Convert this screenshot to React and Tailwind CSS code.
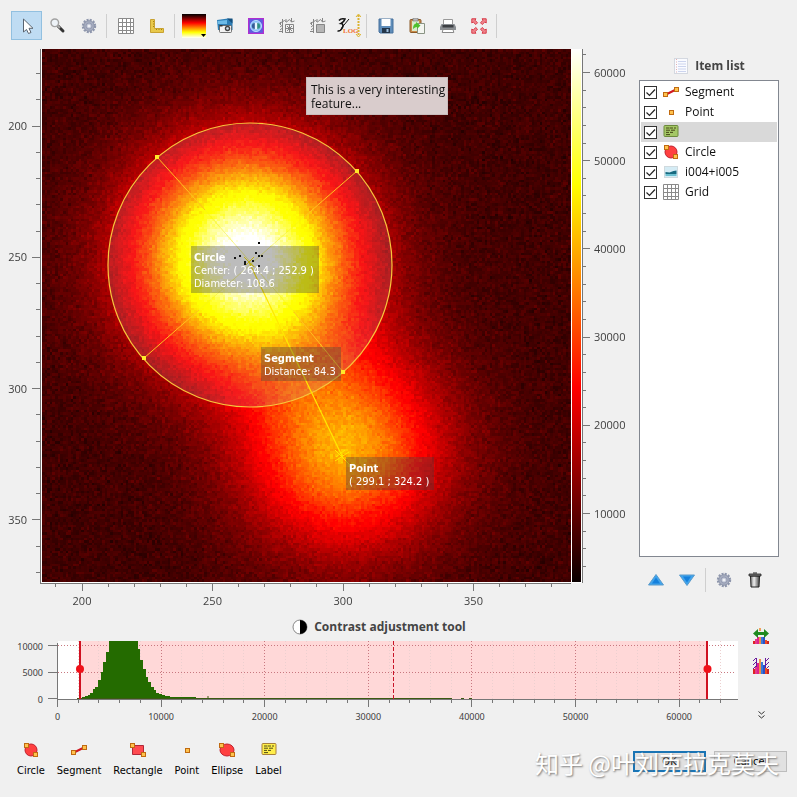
import { useEffect, useRef } from "react";

const range = (from, to, step) => {
  const out = [];
  for (let v = from; v <= to; v += step) out.push(v);
  return out;
};

/* ---------- icons ---------- */

const Icon = ({ size = 16, box = 16, children }) => (
  <svg width={size} height={size} viewBox={`0 0 ${box} ${box}`} aria-hidden="true" className="shrink-0">
    {children}
  </svg>
);

const Handle = ({ x, y }) => <rect x={x} y={y} width="4" height="4" fill="#ffc24d" stroke="#c06a10" />;

const CursorIcon = () => (
  <Icon>
    <path d="M4.500 1v13l3-2.500 2 4 2.500-1-2-4.200h4z" fill="#fff" stroke="#5a6470" strokeLinejoin="round" />
  </Icon>
);
const ZoomIcon = () => (
  <Icon>
    <path d="M8 8 13 13" stroke="#333" strokeWidth="3" strokeLinecap="round" />
    <path d="M7.500 7.500 10 10" stroke="#aaa" strokeWidth="2" />
    <circle cx="4.800" cy="4.800" r="3.800" fill="#eef3f8" stroke="#a2a2a2" strokeWidth="1.400" />
  </Icon>
);
const GearIcon = () => (
  <Icon>
    <circle cx="8" cy="8" r="6" fill="none" stroke="#8f97ad" strokeWidth="2.400" strokeDasharray="2 1.140" />
    <circle cx="8" cy="8" r="5.300" fill="#a6adc0" stroke="#868ea5" strokeWidth=".8" />
    <circle cx="8" cy="8" r="3" fill="#b9bfd0" stroke="#8c94aa" strokeWidth=".7" />
    <circle cx="8" cy="8" r="1.600" fill="#eef0f5" />
  </Icon>
);
const GridIcon = () => (
  <Icon>
    <path d="M.5.5h15v15H.5z" fill="#fff" />
    <path d="M.5.5h15v15H.5zM4.500 0v16M8.500 0v16M12.500 0v16M0 4.500h16M0 8.500h16M0 12.500h16" fill="none" stroke="#8a8a8a" />
  </Icon>
);
const RulerIcon = () => (
  <Icon>
    <path d="M1.500 1.500h4v9h9v4h-13z" fill="#e8c84a" stroke="#c8a232" />
    <path d="M4 3.500h1M4 6h1M4 8.500h1M7.500 11v1M10 11v1M12.500 11v1" stroke="#a58010" />
  </Icon>
);
const ColormapIcon = () => (
  <Icon size={24} box={24}>
    <defs>
      <linearGradient id="cmap" x1="0" y1="0" x2="0" y2="1">
        <stop offset="0" stopColor="#000" />
        <stop offset=".37" stopColor="#f00" />
        <stop offset=".76" stopColor="#ff0" />
        <stop offset="1" stopColor="#fff" />
      </linearGradient>
    </defs>
    <rect y="0" width="24" height="24" fill="url(#cmap)" />
    <path d="M19 20h5l-2.500 3z" fill="#000" />
  </Icon>
);
const SnapshotIcon = () => (
  <Icon>
    <path d="M0 2 11 .500l4.500 1V12H1z" fill="#2b7db5" />
    <path d="M.5 3 10 2v4H1z" fill="#6cbbe8" />
    <path d="M10 .5h5.500v5z" fill="#134f7d" />
    <rect x="2.500" y="7.500" width="12" height="7" rx="1" fill="#f2f2f2" stroke="#555" strokeWidth=".8" />
    <path d="M2.500 7h3v1.500h-3z" fill="#333" />
    <circle cx="10.500" cy="10.500" r="2.700" fill="#444" />
    <circle cx="10.500" cy="10.500" r="1.300" fill="#cfe2f0" />
  </Icon>
);
const ContrastPreviewIcon = () => (
  <Icon>
    <rect x=".5" y=".5" width="15" height="15" fill="#5a5fe0" stroke="#b02fd0" strokeWidth="1.500" />
    <circle cx="8" cy="8" r="5.500" fill="#7fb8f5" stroke="#bfe0ff" />
    <circle cx="8" cy="8" r="3.600" fill="#e8f6ff" />
    <path d="M6.800 5a3 3 0 0 0 0 6z" fill="#345a96" />
    <path d="M9.200 5a3 3 0 0 1 0 6z" fill="#2f8f86" />
  </Icon>
);
const SectionXIcon = ({ filled }) => (
  <Icon>
    <g fill="none" stroke="#858585">
      <path d="M3.500 1v14M0 13.500h4M0 5.500l3-1.500 2.500-1.500 2 1.500 3-2.500 2 2.500 3-1M1 9l2.500-2M1 12l2.500-2M12.500 0v4M7 1v3M1.500 4v3" />
      {filled ? (
        <path d="M6.500 6.500h8v8h-8z" fill="#b5b5b5" />
      ) : (
        <path d="M6.500 6.500h8v8h-8zM6 10.500h9M10.500 6v9M8 8l5 5M13 8l-5 5" />
      )}
    </g>
  </Icon>
);
const LogIcon = () => (
  <svg width="24" height="26" viewBox="0 0 24 26" aria-hidden="true">
    <path d="M2 7.500q2-2.500 6-1.500-1 3-4 4.500 3 .5 1.500 4-2 4-5 3.500" fill="none" stroke="#111" strokeWidth="1.600" />
    <path d="M4.500 15 12 6" stroke="#111" />
    <text x="6" y="20" fontSize="7" fontWeight="bold" fill="#f07030" fontFamily="Liberation Serif, serif">LOG</text>
    <path d="M21.500 2v21" stroke="#dcb432" strokeWidth="2" strokeDasharray="2 1" />
    <path d="m19 4 2.500-3L24 4M19 21l2.500 3 2.500-3" fill="none" stroke="#dcb432" />
  </svg>
);
const SaveIcon = () => (
  <Icon>
    <path d="M1 1h14v14H2l-1-1z" fill="#5f8dba" stroke="#46719c" />
    <rect x="3.500" y="1" width="9" height="7" fill="#fff" />
    <rect x="4" y="10" width="8" height="5" fill="#24364a" />
    <rect x="8.500" y="11" width="2" height="3" fill="#9fc0df" />
  </Icon>
);
const PasteIcon = () => (
  <Icon>
    <rect x="1" y="1.500" width="11" height="13" rx="1" fill="#c98a4b" stroke="#8b5a28" />
    <rect x="3" y="3" width="7" height="10" fill="#d9ebcc" />
    <rect x="4" y="0" width="5" height="3" fill="#b9b9b9" stroke="#777" strokeWidth=".6" />
    <path d="M8.500 5.500h7v10h-7z" fill="#f4f6f1" stroke="#8a9484" />
    <path d="M4 11q0-5 3-5.500V4l4.500 3.500L8 11V9q-2 0-4 2z" fill="#4fc02d" />
  </Icon>
);
const PrintIcon = () => (
  <Icon>
    <path d="M3.500 1.500h9v5h-9z" fill="#fff" stroke="#999" />
    <path d="M1.500 6h13L16 9v3H0V9z" fill="#8a8e92" />
    <path d="M2.500 7h11v2.500h-11z" fill="#3c3f43" />
    <path d="M3 11.500h10l.8 3H2.200z" fill="#fff" stroke="#888" />
  </Icon>
);
const ExpandIcon = () => (
  <Icon>
    <g stroke="#d83a48" fill="#f08890">
      <path d="m.8.8h4.200L4 2.200 6.500 4.800 4.800 6.500 2.200 4 .8 5z" />
      <path d="M15.200.8v4.200l-1.400-1-2.600 2.500-1.700-1.700L12 2.200 11 .8z" />
      <path d="M.8 15.200V11l1.400 1 2.600-2.500 1.700 1.700L4 13.800l1 1.400z" />
      <path d="M15.200 15.200H11l1-1.400-2.500-2.600 1.700-1.700 2.600 2.500 1.400-1z" />
    </g>
  </Icon>
);

const CircleIcon = () => (
  <Icon>
    <circle cx="8" cy="8" r="6" fill="#ff4040" stroke="#c0202c" />
    <Handle x={1.5} y={1.5} />
    <Handle x={10.5} y={10.5} />
  </Icon>
);
const EllipseIcon = () => (
  <Icon>
    <ellipse cx="8" cy="8" rx="7" ry="6" fill="#ff4040" stroke="#c0202c" />
    <Handle x={0.5} y={1.5} />
    <Handle x={11.5} y={10.5} />
  </Icon>
);
const SegmentIcon = () => (
  <Icon>
    <path d="M3 10.500 13 5.500" stroke="#d01820" strokeWidth="2" />
    <Handle x={0.5} y={8.5} />
    <Handle x={11.5} y={3.5} />
  </Icon>
);
const RectangleIcon = () => (
  <Icon>
    <path d="M2.500 3.500h11v9h-11z" fill="#ff4a50" stroke="#b02838" />
    <Handle x={0.5} y={1.5} />
    <Handle x={11.5} y={10.5} />
  </Icon>
);
const PointIcon = () => (
  <Icon>
    <Handle x={6.5} y={6.5} />
  </Icon>
);
const LabelIcon = ({ green }) => (
  <Icon>
    <rect x="1" y="1.500" width="14" height="11" rx="1" fill={green ? "#a4c765" : "#ffee4a"} stroke={green ? "#6c8a3c" : "#a8803a"} />
    <path d="M3 4h3.500m.5 0h3m1 0h2M3 6.200h4m1 0h4M3 8.400h3m1 0h3M3 10.600h4" stroke="#3c3a10" strokeWidth=".9" />
  </Icon>
);
const ImageIcon = () => (
  <Icon>
    <rect x="1.500" y="2.500" width="13" height="11" fill="#d5ecf5" stroke="#d0dade" />
    <path d="M2.500 8l4 .500 4-1.500 3-.500V10h-11z" fill="#176a80" />
    <path d="M2.500 10h11v2h-11z" fill="#6cc0d0" />
  </Icon>
);
const ListIcon = () => (
  <Icon>
    <rect x="1.500" y=".5" width="13" height="15" fill="#fafbff" stroke="#d4d8e0" />
    <path d="M5 3.500h8M5 6h8M5 8.500h8M5 11h8M5 13.500h8" stroke="#ccd4ee" />
    <path d="M3.500 1v14" stroke="#e0b0b0" strokeDasharray="1 1.500" />
  </Icon>
);
const ArrowIcon = ({ down }) => (
  <Icon>
    <path d={down ? "M.5 3h15L8 13.500z" : "M.5 13h15L8 2.500z"} fill="#3fa4ee" stroke="#5b9aca" strokeLinejoin="round" />
    <path d={down ? "M4 4.500h8l-4 6z" : "M4 11.500h8l-4-6z"} fill="#1580dc" />
  </Icon>
);
const TrashIcon = () => (
  <Icon>
    <defs>
      <linearGradient id="can">
        <stop offset="0" stopColor="#777" />
        <stop offset=".4" stopColor="#eee" />
        <stop offset="1" stopColor="#444" />
      </linearGradient>
    </defs>
    <path d="M3.500 4h9l-.5 11H4z" fill="url(#can)" stroke="#222" />
    <path d="M2 2h12v2H2z" fill="#777" stroke="#222" strokeWidth=".8" />
    <path d="M6 1h4" stroke="#222" />
  </Icon>
);
const HalfMoonIcon = () => (
  <Icon>
    <circle cx="8" cy="8" r="7" fill="#fff" stroke="#888" />
    <path d="M8 1a7 7 0 0 1 0 14z" fill="#000" />
  </Icon>
);
const BARS = [
  [0, 3, "#d22"], [2, 5, "#e33a8a"], [4, 9, "#e0208c"], [6, 13, "#f0904a"],
  [8, 10, "#3a78d8"], [10, 7, "#2a50c8"], [12, 4, "#ee4a22"], [14, 3, "#c22"],
];
const HistogramIcon = ({ kind }) => (
  <Icon>
    {kind === "clip" && (
      <path d="M0 3l3-3M0 7l4-4M0 11l4-4M0 15l4-4M12 4l4-4M12 8l4-4M12 12l4-4M13 15l3-3M3.500 0v12M12.500 0v12" stroke="#6a1a9c" />
    )}
    {BARS.map(([x, h, c]) => {
      const height = kind === "full" ? Math.min(h, 7) : h + 2;
      return <rect key={x} x={x} y={16 - height} width="2" height={height} fill={c} />;
    })}
    {kind === "full" && (
      <>
        <path d="M0 5.500 5 1v3h6V1l5 4.500-5 4.500V7H5v3z" fill="#1f8a1f" />
        <rect x="6" y="0" width="2" height="3" fill="#f0a05a" />
      </>
    )}
  </Icon>
);

/* ---------- toolbar ---------- */

const TOOLS = [
  [["Select", CursorIcon], ["Zoom", ZoomIcon], ["Settings", GearIcon]],
  [["Grid", GridIcon], ["Axes", RulerIcon]],
  [
    ["Colormap", ColormapIcon],
    ["Snapshot", SnapshotIcon],
    ["Contrast", ContrastPreviewIcon],
    ["Cross section", SectionXIcon],
    ["Average cross section", () => <SectionXIcon filled />],
    ["Logarithmic scale", LogIcon],
  ],
  [["Save", SaveIcon], ["Paste", PasteIcon], ["Print", PrintIcon], ["Full screen", ExpandIcon]],
];

function Toolbar() {
  return (
    <header className="flex h-[49px] items-start px-[11px] pt-[11px]">
      {TOOLS.map((group, g) => (
        <div key={g} className="flex items-center">
          {group.map(([name, Glyph], i) => (
            <button
              key={name}
              type="button"
              aria-label={name}
              className={
                g === 0 && i === 0
                  ? "flex h-[29px] w-[31px] items-center justify-center border border-[#92c0e0] bg-[#bfdcf3]"
                  : "flex h-[29px] w-[31px] items-center justify-center"
              }
            >
              <Glyph />
            </button>
          ))}
          <div className="mr-[3px] ml-[2px] h-6 w-px bg-[#cfcfcf]" />
        </div>
      ))}
    </header>
  );
}

/* ---------- image plot ---------- */

const COLS = 202;
const ROWS = 204;

function Heatmap() {
  const ref = useRef(null);
  useEffect(() => {
    const ctx = ref.current.getContext("2d");
    const img = ctx.createImageData(COLS, ROWS);
    let seed = 12345;
    const rnd = () => {
      seed = (seed * 1664525 + 1013904223) % 4294967296;
      return seed / 4294967296;
    };
    for (let j = 0; j < ROWS; j++) {
      for (let i = 0; i < COLS; i++) {
        const x = 42 + (i + 0.5) * (529 / COLS);
        const y = 49 + (j + 0.5) * (533 / ROWS);
        const d1 = (x - 246) ** 2 + (y - 258) ** 2;
        const d2 = (x - 345) ** 2 + (y - 450) ** 2;
        const noise = (rnd() + rnd() + rnd() - 1.5) * 2000;
        const v = 7000 + 57000 * Math.exp(-d1 / 11000) + 31000 * Math.exp(-d2 / 9600) + noise;
        const t = Math.max(0, Math.min(1, (v - 2200) / 60500));
        const k = (j * COLS + i) * 4;
        img.data[k] = Math.min(255, 10 + (t / 0.355) * 245);
        img.data[k + 1] = Math.max(0, Math.min(255, ((t - 0.365) / 0.35) * 255));
        img.data[k + 2] = Math.max(0, Math.min(255, ((t - 0.76) / 0.22) * 255));
        img.data[k + 3] = 255;
      }
    }
    ctx.putImageData(img, 0, 0);
  }, []);
  return <canvas ref={ref} width={COLS} height={ROWS} className="block h-full w-full [image-rendering:pixelated]" />;
}

const SPECKS = [[258, 242], [234, 257], [239, 255], [255, 252], [258, 255], [261, 255], [244, 261], [252, 260], [258, 265], [244, 263]];
const HANDLES = [[157, 157], [357, 171], [144, 358], [343, 372]];

function PlotLabel({ x, y, w, h, title, lines }) {
  return (
    <g>
      <rect x={x} y={y} width={w} height={h} fill="#404040" fillOpacity=".35" />
      <text x={x + 3} y={y + 15} fontSize="11" fontWeight="bold" fill="#fff">{title}</text>
      {lines.map((l, i) => (
        <text key={l} x={x + 3} y={y + 28 + i * 13} fontSize="11" fill="#fff">{l}</text>
      ))}
    </g>
  );
}

function ImagePlot() {
  const px = (v) => 82 + (v - 200) * 2.61;
  const py = (v) => 126 + (v - 200) * 2.625;
  const pz = (v) => 72.5 + (60000 - v) * 0.00882;
  return (
    <svg viewBox="0 49 632 566" className="block w-full" role="img" aria-label="Image plot">
      <defs>
        <linearGradient id="scale" x1="0" y1="1" x2="0" y2="0">
          <stop offset="0" stopColor="#0a0000" />
          <stop offset=".365" stopColor="#f00" />
          <stop offset=".746" stopColor="#ff0" />
          <stop offset="1" stopColor="#fff" />
        </linearGradient>
        <radialGradient id="veil">
          <stop offset=".45" stopColor="#d0d0e0" stopOpacity="0" />
          <stop offset=".8" stopColor="#c0c0d0" stopOpacity=".1" />
          <stop offset="1" stopColor="#b0b0c0" stopOpacity=".18" />
        </radialGradient>
      </defs>

      <rect x="41" y="49" width="541" height="534" fill="#fff" />
      <foreignObject x="42" y="49" width="529" height="533">
        <Heatmap />
      </foreignObject>
      <rect x="572" y="49" width="9" height="533" fill="url(#scale)" />

      <g stroke="#777" shapeRendering="crispEdges">
        <path d="M40.500 49V583.500H571M582.500 49V583" fill="none" />
        {range(190, 380, 10).map((v) => (
          <path key={`x${v}`} d={`M${px(v)} 584v${v % 50 ? 3 : 7}`} />
        ))}
        {range(180, 370, 10).map((v) => (
          <path key={`y${v}`} d={`M40 ${py(v)}h-${v % 50 ? 4 : 8}`} />
        ))}
        {range(4000, 62000, 2000).map((v) => (
          <path key={`z${v}`} d={`M583 ${pz(v)}h${v % 10000 ? 3 : 7}`} />
        ))}
      </g>
      <g fontSize="11" fill="#404040" fontFamily="'Open Sans', sans-serif">
        {range(200, 350, 50).map((v) => (
          <g key={v}>
            <text x={px(v)} y="605" textAnchor="middle">{v}</text>
            <text x="27" y={py(v) + 4} textAnchor="end">{v}</text>
          </g>
        ))}
        {range(10000, 60000, 10000).map((v) => (
          <text key={v} x="594" y={pz(v) + 4}>{v}</text>
        ))}
      </g>

      <circle cx="250" cy="265" r="142" fill="url(#veil)" stroke="#f8c63c" strokeWidth="1.200" />
      <g stroke="#ffc020" strokeWidth="1">
        <path d="M157 157 205 210M294 312 343 372M357 171 304 217M199 310 144 358" />
        <path d="M205 210 294 312M304 217 199 310" stroke="#f4f020" strokeOpacity=".5" />
        <path d="M249 262 343 458" stroke="#ffe800" strokeWidth="1.200" />
      </g>
      <path d="m244 257 10 10m0-10-8 8M335 450l14 14M336 457l9-7M335 461l14-9M342 449v14" stroke="#ffe800" />
      {SPECKS.map(([x, y]) => (
        <rect key={`${x}-${y}`} x={x} y={y} width="2" height="2" fill="#000" />
      ))}
      {HANDLES.map(([x, y]) => (
        <rect key={x} x={x - 2} y={y - 2} width="4" height="4" fill="#ffe92a" />
      ))}

      <g fontFamily="'DejaVu Sans Condensed', 'DejaVu Sans', sans-serif">
        <PlotLabel x={191} y={246} w={128} h={47} title="Circle" lines={["Center: ( 264.4 ; 252.9 )", "Diameter: 108.6"]} />
        <PlotLabel x={261} y={347} w={80} h={34} title="Segment" lines={["Distance: 84.3"]} />
        <PlotLabel x={346} y={457} w={88} h={33} title="Point" lines={["( 299.1 ; 324.2 )"]} />
      </g>
      <rect x="306.500" y="77.500" width="141" height="37" fill="#d9cccc" stroke="#c9bcbc" />
      <g fontSize="12" fill="#111" fontFamily="'Open Sans', sans-serif">
        <text x="311" y="94">This is a very interesting</text>
        <text x="311" y="108">feature...</text>
      </g>
    </svg>
  );
}

/* ---------- item list ---------- */

const ITEMS = [
  ["Segment", SegmentIcon],
  ["Point", PointIcon],
  ["", () => <LabelIcon green />],
  ["Circle", CircleIcon],
  ["i004+i005", ImageIcon],
  ["Grid", GridIcon],
];

function ItemList() {
  return (
    <aside className="flex w-[165px] shrink-0 flex-col pt-[9px] pr-[18px] pl-[7px]">
      <h2 className="flex h-[22px] items-start justify-center gap-[6px] text-xs font-bold text-[#444]">
        <ListIcon />
        Item list
      </h2>
      <ul className="min-h-[477px] border border-[#828790] bg-white px-px pt-px">
        {ITEMS.map(([name, Glyph], i) => (
          <li key={i} className={i === 2 ? "bg-[#d9d9d9]" : ""}>
            <label className="flex h-5 items-center gap-[6px] px-[3px] text-xs text-[#111]">
              <span className="grid size-[13px] place-items-center">
                <input
                  type="checkbox"
                  defaultChecked
                  aria-label={name || "Label"}
                  className="peer col-start-1 row-start-1 size-[13px] appearance-none border border-[#333] bg-white"
                />
                <svg viewBox="0 0 13 13" className="pointer-events-none col-start-1 row-start-1 hidden size-[13px] peer-checked:block" aria-hidden="true">
                  <path d="m2.500 6.500 3 3 5.500-6" fill="none" stroke="#222" strokeWidth="1.200" />
                </svg>
              </span>
              <Glyph />
              <span>{name}</span>
            </label>
          </li>
        ))}
      </ul>
      <div className="flex h-[46px] items-center pl-px">
        <button type="button" aria-label="Move up" className="flex w-[31px] justify-center"><ArrowIcon /></button>
        <button type="button" aria-label="Move down" className="flex w-[31px] justify-center"><ArrowIcon down /></button>
        <div className="mr-[2px] ml-[3px] h-6 w-px bg-[#cfcfcf]" />
        <button type="button" aria-label="Item settings" className="flex w-[31px] justify-center"><GearIcon /></button>
        <button type="button" aria-label="Delete" className="flex w-[31px] justify-center"><TrashIcon /></button>
      </div>
    </aside>
  );
}

/* ---------- contrast tool ---------- */

const HISTOGRAM = [
  [77, 698], [82, 697], [85, 696], [88, 695], [90, 693], [93, 689], [95, 687], [98, 680], [101, 672], [103, 662], [106, 652],
  [109, 641], [138, 649], [140, 660], [143, 669], [146, 677], [148, 682], [151, 687], [154, 690], [156, 693], [159, 694],
  [162, 695], [165, 696], [170, 697], [196, 698], [452, 699],
];
/* each entry holds the left edge of a bin and the height that starts there */
const HISTOGRAM_PATH = "M77 699" + HISTOGRAM.map(([x, y]) => `H${x}V${y}`).join("") + "Z";

function Contrast() {
  const cx = (v) => 57.5 + v * 0.01036;
  return (
    <section className="flex">
      <div className="min-w-0 flex-1">
        <h2 className="flex h-6 items-center justify-center gap-[6px] pl-[18px] text-xs font-bold text-[#444]">
          <HalfMoonIcon />
          Contrast adjustment tool
        </h2>
        <svg viewBox="0 639 740 86" className="block w-full" role="img" aria-label="Contrast histogram">
          <rect x="58" y="641" width="680" height="58" fill="#fff" />
          <rect x="80" y="641" width="627" height="58" fill="#ffd8d8" />
          <g shapeRendering="crispEdges" strokeDasharray="1 2">
            {range(2000, 64000, 2000).map((v) => (
              <path key={v} d={`M${cx(v)} 641V699`} stroke={v % 10000 ? "#ecd0d0" : "#c87880"} />
            ))}
            <path d="M58 645.500H736M58 672.500H736" stroke="#c87880" />
          </g>
          <path d={HISTOGRAM_PATH} fill="#246b00" shapeRendering="crispEdges" />
          <path d="M77 698.500H452M461 698.500h3M469 698.500h3M207 697h2" stroke="#3c5a12" />
          {range(641, 695, 6).map((y) => (
            <rect key={y} x="393" y={y} width="1" height="4" fill="#c81428" />
          ))}
          <g stroke="#777" shapeRendering="crispEdges">
            <path d="M57.500 643V699.500H738M57 645.500h-9M57 672.500h-9M57 698.500h-9" fill="none" />
            {range(0, 64000, 2000).map((v) => (
              <path key={v} d={`M${cx(v)} 700v${v % 10000 ? 3 : 7}`} />
            ))}
          </g>
          <g fill="#d01020">
            <rect x="79" y="641" width="2" height="58" />
            <rect x="706" y="641" width="2" height="58" />
            <circle cx="80" cy="669" r="4" fill="#f01018" />
            <circle cx="707.500" cy="669" r="4" fill="#f01018" />
          </g>
          <g fontSize="9" fill="#404040" fontFamily="'Noto Sans', sans-serif">
            {range(0, 60000, 10000).map((v) => (
              <text key={v} x={cx(v)} y="720" textAnchor="middle">{v}</text>
            ))}
            <text x="43" y="650" textAnchor="end">10000</text>
            <text x="43" y="676" textAnchor="end">5000</text>
            <text x="43" y="703" textAnchor="end">0</text>
          </g>
        </svg>
      </div>
      <div className="flex w-[57px] shrink-0 flex-col items-center pt-[13px] pr-[15px]">
        <button type="button" aria-label="Full range" className="flex h-[30px]"><HistogramIcon kind="full" /></button>
        <button type="button" aria-label="Eliminate outliers" className="flex h-[53px]"><HistogramIcon kind="clip" /></button>
        <button type="button" aria-label="More" className="flex">
          <svg width="7" height="8" viewBox="0 0 7 8" aria-hidden="true">
            <path d="m.5.5 3 2.500 3-2.500m-6 4 3 2.500 3-2.500" fill="none" stroke="#333" />
          </svg>
        </button>
      </div>
    </section>
  );
}

/* ---------- footer ---------- */

const SHAPES = [
  ["Circle", CircleIcon],
  ["Segment", SegmentIcon],
  ["Rectangle", RectangleIcon],
  ["Point", PointIcon],
  ["Ellipse", EllipseIcon],
  ["Label", LabelIcon],
];

function Footer() {
  return (
    <footer className="relative flex items-start justify-between pt-[17px] pr-[10px] pl-[17px] font-['DejaVu_Sans_Condensed','DejaVu_Sans',sans-serif] text-[11px]">
      <div className="flex gap-3">
        {SHAPES.map(([name, Glyph]) => (
          <button key={name} type="button" className="flex flex-col items-center gap-[5px] leading-4 text-black">
            <Glyph />
            {name}
          </button>
        ))}
      </div>
      <div className="flex gap-2 pt-[9px] text-black">
        <button type="button" className="h-[21px] w-[73px] border-2 border-[#1a74b4] bg-[#e1e1e1] leading-4">OK</button>
        <button type="button" className="h-[21px] w-[73px] border border-[#bdbdbd] bg-[#e1e1e1] leading-4">Cancel</button>
      </div>
      <div className="pointer-events-none absolute top-[20px] right-[18px] font-['Noto_Sans_CJK_SC',sans-serif] text-[24px] whitespace-nowrap text-white [text-shadow:1px_1px_2px_#777]">
        知乎 @叶刘克拉克莫夫
      </div>
    </footer>
  );
}

export default function App() {
  return (
    <div className="min-h-screen bg-[#f0f0f0] font-['Open_Sans',sans-serif]">
      <Toolbar />
      <main className="flex items-start">
        <div className="min-w-0 flex-1">
          <ImagePlot />
        </div>
        <ItemList />
      </main>
      <Contrast />
      <Footer />
    </div>
  );
}
